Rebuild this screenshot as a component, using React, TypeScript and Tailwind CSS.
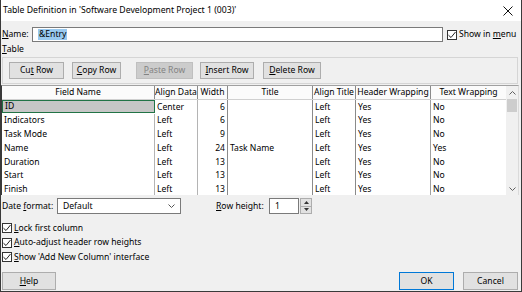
const rows = [
  { field: 'ID', align: 'Center', width: 6, title: '', alignTitle: 'Left', header: 'Yes', wrap: 'No' },
  { field: 'Indicators', align: 'Left', width: 6, title: '', alignTitle: 'Left', header: 'Yes', wrap: 'No' },
  { field: 'Task Mode', align: 'Left', width: 9, title: '', alignTitle: 'Left', header: 'Yes', wrap: 'No' },
  { field: 'Name', align: 'Left', width: 24, title: 'Task Name', alignTitle: 'Left', header: 'Yes', wrap: 'Yes' },
  { field: 'Duration', align: 'Left', width: 13, title: '', alignTitle: 'Left', header: 'Yes', wrap: 'No' },
  { field: 'Start', align: 'Left', width: 13, title: '', alignTitle: 'Left', header: 'Yes', wrap: 'No' },
  { field: 'Finish', align: 'Left', width: 13, title: '', alignTitle: 'Left', header: 'Yes', wrap: 'No' },
];

function Check() {
  return (
    <span className="flex h-[10px] w-[10px] shrink-0 items-center justify-center border border-[#333] bg-white">
      <svg width="8" height="8" viewBox="0 0 8 8">
        <path d="M0.5 4.2 L3 6.5 L7.5 1" fill="none" stroke="#222" strokeWidth="1" />
      </svg>
    </span>
  );
}

function Btn({ children, className = '', disabled = false, primary = false }: { children: React.ReactNode; className?: string; disabled?: boolean; primary?: boolean }) {
  return (
    <div
      className={`flex items-center justify-center border ${
        disabled
          ? 'border-[#bfbfbf] bg-[#cccccc] text-[#838383]'
          : primary
          ? 'border-[#0078d7] bg-[#e1e1e1] text-black'
          : 'border-[#adadad] bg-[#e1e1e1] text-black'
      } ${className}`}
    >
      {children}
    </div>
  );
}

const cols = 'grid grid-cols-[153px_43px_30px_85px_43px_75px_75px]';

export default function App() {
  return (
    <div className="flex h-[292px] w-[522px] flex-col whitespace-nowrap border-x border-b border-[#3a3a3a] bg-[#f0f0f0] font-['Noto_Sans',sans-serif] text-[8.6px] leading-none text-black">
      {/* title bar */}
      <div className="flex h-[21px] shrink-0 items-center justify-between bg-white pl-[2px] pr-[8px] text-[8.7px]">
        <span>Table Definition in 'Software Development Project 1 (003)'</span>
        <svg width="10" height="10" viewBox="0 0 10 10">
          <path d="M0.5 0.5 L9.5 9.5 M9.5 0.5 L0.5 9.5" stroke="#111" strokeWidth="1" />
        </svg>
      </div>

      {/* name row */}
      <div className="mt-[6px] flex h-[15px] items-center">
        <span className="w-[31px] pl-[1px]">
          <u>N</u>ame:
        </span>
        <div className="flex h-[15px] w-[411px] items-center border border-[#7a7a7a] bg-white pl-[5px]">
          <span className="bg-[#99c9ef] px-[1px] py-[1px]">&amp;Entry</span>
        </div>
        <div className="ml-[4px] flex items-center gap-[2px]">
          <Check />
          <span>
            Show in <u>m</u>enu
          </span>
        </div>
      </div>

      <div className="mt-[2px] flex h-[11px] items-center pl-[1px]">
        <u>T</u>able
      </div>

      {/* toolbar group */}
      <div className="ml-[1px] mt-[2px] flex h-[27px] w-[516px] items-center border border-[#d5d5d5]">
        <Btn className="ml-[6px] h-[17px] w-[55px]">
          Cu<u>t</u>&nbsp;Row
        </Btn>
        <Btn className="ml-[8px] h-[17px] w-[49px]">
          <u>C</u>opy Row
        </Btn>
        <Btn disabled className="ml-[15px] h-[17px] w-[57px]">
          <u>P</u>aste Row
        </Btn>
        <Btn className="ml-[7px] h-[17px] w-[54px]">
          <u>I</u>nsert Row
        </Btn>
        <Btn className="ml-[9px] h-[17px] w-[58px]">
          <u>D</u>elete Row
        </Btn>
      </div>

      {/* table */}
      <div className="mt-[1px] flex h-[110px] w-[518px] border-l border-r border-t border-l-[#3a3a3a] border-r-[#dadada] border-t-[#a0a0a0] bg-white">
        <div className="flex w-[504px] flex-col">
          <div className={`${cols} h-[14px] border-b border-[#d0d0d0] bg-[#fbfbfb]`}>
            {['Field Name', 'Align Data', 'Width', 'Title', 'Align Title', 'Header Wrapping', 'Text Wrapping'].map((h, i) => (
              <div
                key={h}
                className={`flex items-center justify-center overflow-hidden ${i < 6 ? 'border-r border-[#8a8a8a]' : ''}`}
              >
                {h}
              </div>
            ))}
          </div>
          <div className="flex-1 overflow-hidden">
            {rows.map((r, idx) => (
              <div key={r.field} className={`${cols} h-[13.75px]`}>
                <div
                  className={`flex items-center pl-[2px] ${
                    idx === 0 ? 'h-[13px] border border-[#217346] bg-[#c6c6c6] pl-[1px]' : 'border-r border-[#b4b4b4]'
                  }`}
                >
                  {r.field}
                </div>
                <div className="flex items-center border-r border-[#b4b4b4] pl-[2px]">{r.align}</div>
                <div className="flex items-center justify-end border-r border-[#8a8a8a] pr-[2px]">{r.width}</div>
                <div className="flex items-center border-r border-[#8a8a8a] pl-[2px]">{r.title}</div>
                <div className="flex items-center border-r border-[#8a8a8a] pl-[2px]">{r.alignTitle}</div>
                <div className="flex items-center border-r border-[#a0a0a0] pl-[2px]">{r.header}</div>
                <div className="flex items-center pl-[2px]">{r.wrap}</div>
              </div>
            ))}
          </div>
        </div>
        {/* scrollbar */}
        <div className="flex w-[12px] flex-col bg-[#f0f0f0]">
          <div className="flex h-[13px] items-center justify-center">
            <svg width="7" height="4" viewBox="0 0 7 4">
              <path d="M0.5 3.5 L3.5 0.5 L6.5 3.5" fill="none" stroke="#606060" strokeWidth="1" />
            </svg>
          </div>
          <div className="mx-[1px] h-[13px] bg-[#cdcdcd]" />
          <div className="flex-1" />
          <div className="flex h-[13px] items-center justify-center">
            <svg width="7" height="4" viewBox="0 0 7 4">
              <path d="M0.5 0.5 L3.5 3.5 L6.5 0.5" fill="none" stroke="#606060" strokeWidth="1" />
            </svg>
          </div>
        </div>
      </div>

      {/* date format / row height */}
      <div className="mt-[3px] flex h-[16px] items-center">
        <span className="w-[56px] pl-[1px]">
          Date <u>f</u>ormat:
        </span>
        <div className="flex h-[16px] w-[124px] items-center justify-between border border-[#7a7a7a] bg-white pl-[5px] pr-[5px]">
          <span>Default</span>
          <svg width="7" height="4" viewBox="0 0 7 4">
            <path d="M0.5 0.5 L3.5 3.5 L6.5 0.5" fill="none" stroke="#555" strokeWidth="1" />
          </svg>
        </div>
        <span className="ml-[35px] w-[53px]">
          <u>R</u>ow height:
        </span>
        <div className="flex h-[16px] w-[30px] items-center border border-[#7a7a7a] bg-white pl-[5px]">1</div>
        <div className="ml-[1px] flex h-[16px] w-[12px] flex-col border border-[#adadad] bg-[#e1e1e1]">
          <div className="flex flex-1 items-center justify-center border-b border-[#adadad]">
            <svg width="5" height="3" viewBox="0 0 5 3">
              <path d="M0 3 L2.5 0 L5 3 Z" fill="#333" />
            </svg>
          </div>
          <div className="flex flex-1 items-center justify-center">
            <svg width="5" height="3" viewBox="0 0 5 3">
              <path d="M0 0 L2.5 3 L5 0 Z" fill="#333" />
            </svg>
          </div>
        </div>
      </div>

      {/* checkboxes */}
      <div className="mt-[7px] flex flex-col pl-[1px]">
        <div className="flex h-[14.5px] items-center gap-[2px]">
          <Check />
          <span>
            <u>L</u>ock first column
          </span>
        </div>
        <div className="flex h-[14.5px] items-center gap-[2px]">
          <Check />
          <span>
            <u>A</u>uto-adjust header row heights
          </span>
        </div>
        <div className="flex h-[14.5px] items-center gap-[2px]">
          <Check />
          <span>
            <u>S</u>how 'Add New Column' interface
          </span>
        </div>
      </div>

      {/* buttons */}
      <div className="mt-[7.5px] flex h-[18px] items-center">
        <Btn className="ml-[1px] h-[18px] w-[54px]">
          <u>H</u>elp
        </Btn>
        <div className="flex-1" />
        <Btn primary className="h-[18px] w-[55px]">
          OK
        </Btn>
        <Btn className="ml-[9px] mr-[3px] h-[18px] w-[55px]">Cancel</Btn>
      </div>
    </div>
  );
}
